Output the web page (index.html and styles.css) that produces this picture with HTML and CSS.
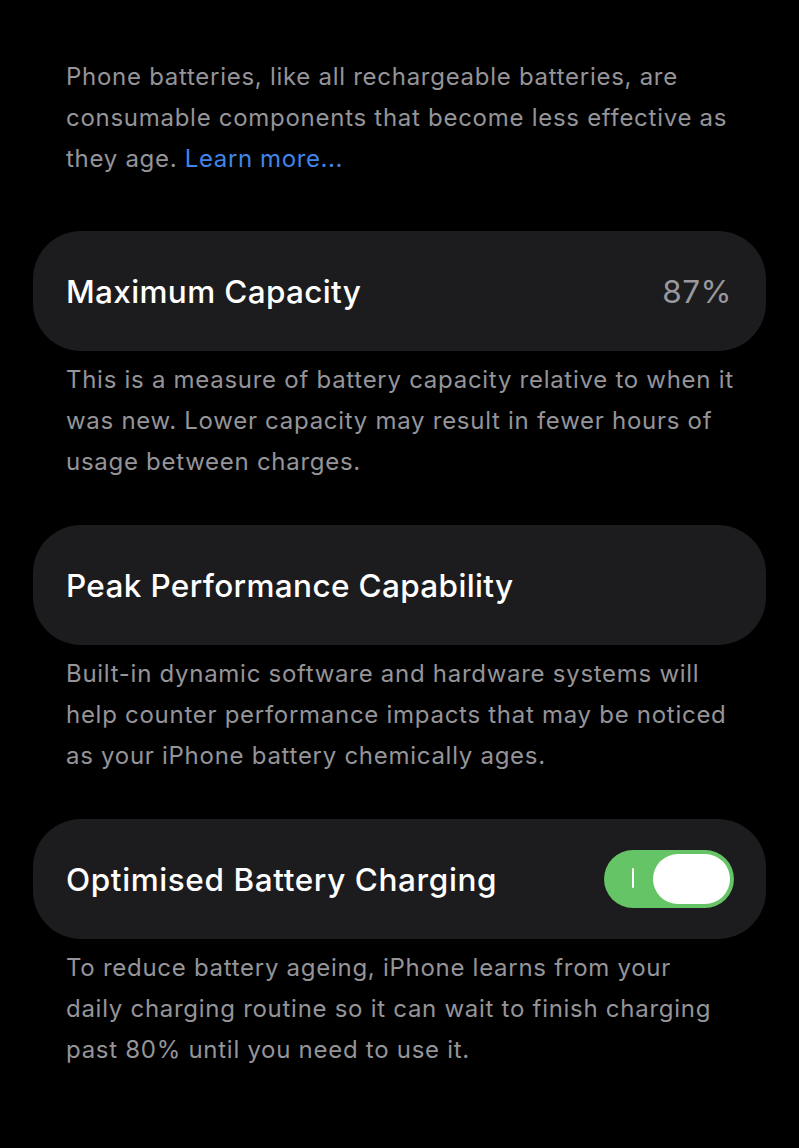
FILE: index.html
```html
<!DOCTYPE html>
<html>
<head>
<meta charset="utf-8">
<link rel="stylesheet" href="styles.css">
</head>
<body>
<div class="page">
  <p class="note intro">Phone batteries, like all rechargeable batteries, are consumable components that become less effective as they age. <a class="link">Learn more...</a></p>

  <div class="card">
    <span class="title">Maximum Capacity</span>
    <span class="value">87%</span>
  </div>
  <p class="note">This is a measure of battery capacity relative to when it was new. Lower capacity may result in fewer hours of usage between charges.</p>

  <div class="card">
    <span class="title">Peak Performance Capability</span>
  </div>
  <p class="note">Built-in dynamic software and hardware systems will help counter performance impacts that may be noticed as your iPhone battery chemically ages.</p>

  <div class="card">
    <span class="title title-wide">Optimised Battery Charging</span>
    <span class="toggle"><span class="mark"></span><span class="knob"></span></span>
  </div>
  <p class="note">To reduce battery ageing, iPhone learns from your daily charging routine so it can wait to finish charging past 80% until you need to use it.</p>
</div>
</body>
</html>
```
FILE: styles.css
```css
html, body {
  margin: 0;
  padding: 0;
  background: #000;
}
body {
  font-family: Inter, "Open Sans", sans-serif;
  -webkit-font-smoothing: antialiased;
}
.page {
  padding: 56px 33px 0 33px;
}
.note {
  margin: 8px 0 43px 0;
  padding: 0 32px 0 33px;
  font-size: 24px;
  line-height: 41px;
  color: #949499;
  letter-spacing: 0.72px;
}
.intro {
  margin: 0 0 52px 0;
}
.link {
  color: #3f85ea;
  text-decoration: none;
  letter-spacing: 0.6px;
}
.card {
  height: 120px;
  background: #1c1c1e;
  border-radius: 48px;
  display: flex;
  align-items: center;
  justify-content: space-between;
  padding: 0 33px 0 33px;
}
.title {
  color: #fff;
  font-size: 31.5px;
  font-weight: 500;
  letter-spacing: 0.35px;
}
.title-wide {
  letter-spacing: 0.6px;
}
.value {
  color: #98989e;
  font-size: 31.5px;
  font-weight: 400;
  letter-spacing: 0.5px;
  margin-right: 1px;
}
.toggle {
  position: relative;
  width: 130px;
  height: 58px;
  border-radius: 29px;
  background: #65c466;
  margin-right: -1px;
}
.mark {
  position: absolute;
  left: 28px;
  top: 18px;
  width: 2px;
  height: 20px;
  background: #fff;
  border-radius: 1px;
}
.knob {
  position: absolute;
  right: 4px;
  top: 4px;
  width: 77px;
  height: 50px;
  border-radius: 25px;
  background: #fff;
}
```
